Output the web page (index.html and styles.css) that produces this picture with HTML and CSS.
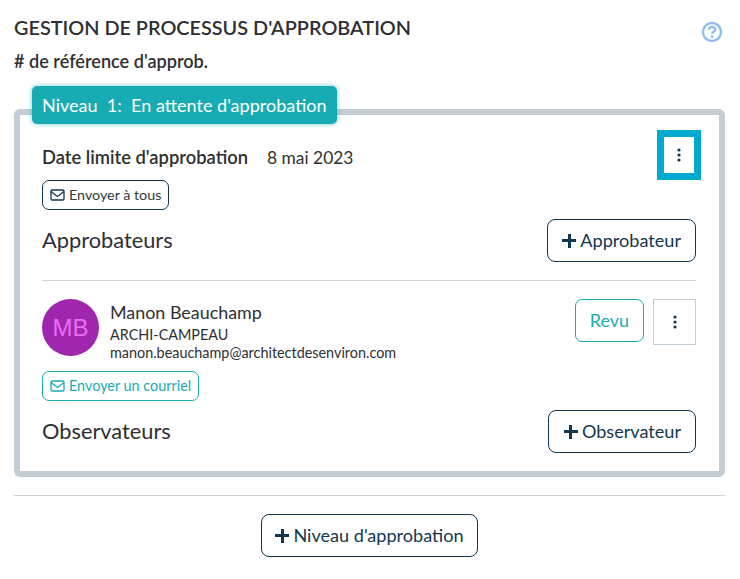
FILE: index.html
```html
<!DOCTYPE html>
<html lang="fr">
<head>
<meta charset="utf-8">
<title>Gestion de processus d'approbation</title>
<link rel="stylesheet" href="styles.css">
</head>
<body>
<main class="page">
  <header class="head">
    <div>
      <h1 class="title">GESTION DE PROCESSUS D'APPROBATION</h1>
      <p class="ref">
        # de référence d'approb.</p>
    </div>
    <svg class="help" width="22" height="22" viewBox="0 0 22 22" aria-hidden="true">
      <circle cx="11" cy="11" r="9" fill="none" stroke="#8fbdee" stroke-width="2.4"/>
      <path d="M7.9 8.6c.2-1.8 1.5-2.8 3.2-2.8 1.8 0 3.1 1.1 3.1 2.6 0 2.3-3 2.3-3 4.5" fill="none" stroke="#8fbdee" stroke-width="2.2"/>
      <circle cx="11.1" cy="15.6" r="1.4" fill="#8fbdee"/>
    </svg>
  </header>

  <section class="card">
    <div class="tag">Niveau&nbsp; 1:&nbsp; En attente d'approbation</div>

    <div class="date-row">
      <div class="date">
        <strong class="date-label">Date limite d'approbation</strong>
        <span class="date-value">8 mai 2023</span>
      </div>
      <button class="kebab kebab-focus" aria-label="Options">
        <svg width="4" height="14" viewBox="0 0 4 14"><circle cx="2" cy="2" r="1.6"/><circle cx="2" cy="7" r="1.6"/><circle cx="2" cy="12" r="1.6"/></svg>
      </button>
    </div>

    <button class="small-btn small-dark">
      <svg width="15" height="12" viewBox="0 0 15 12" fill="none" stroke="currentColor" stroke-width="1.3"><rect x="1" y="1" width="13" height="10" rx="1.2"/><path d="M1 2.5l6.5 5 6.5-5"/></svg>
      Envoyer à tous
    </button>

    <div class="section-row approvers">
      <h2 class="section-title">Approbateurs</h2>
      <button class="add-btn"><span class="plus"></span>Approbateur</button>
    </div>

    <hr class="inner-rule">

    <div class="person">
      <div class="avatar">MB</div>
      <div class="person-info">
        <div class="person-name">Manon Beauchamp</div>
        <div class="person-org">ARCHI-CAMPEAU</div>
        <div class="person-mail">manon.beauchamp@architectdesenviron.com</div>
      </div>
      <div class="person-actions">
        <button class="review-btn">Revu</button>
        <button class="kebab kebab-plain" aria-label="Options">
          <svg width="4" height="14" viewBox="0 0 4 14"><circle cx="2" cy="2" r="1.6"/><circle cx="2" cy="7" r="1.6"/><circle cx="2" cy="12" r="1.6"/></svg>
        </button>
      </div>
    </div>

    <button class="small-btn small-teal">
      <svg width="15" height="12" viewBox="0 0 15 12" fill="none" stroke="currentColor" stroke-width="1.3"><rect x="1" y="1" width="13" height="10" rx="1.2"/><path d="M1 2.5l6.5 5 6.5-5"/></svg>
      Envoyer un courriel
    </button>

    <div class="section-row observers">
      <h2 class="section-title">Observateurs</h2>
      <button class="add-btn"><span class="plus"></span>Observateur</button>
    </div>
  </section>

  <hr class="outer-rule">

  <div class="footer">
    <button class="add-btn"><span class="plus"></span>Niveau d'approbation</button>
  </div>
</main>
</body>
</html>
```
FILE: styles.css
```css
* { box-sizing: border-box; }
html, body { margin: 0; background: #fff; }
body { font-family: Lato, "Open Sans", sans-serif; color: #2f2f33; }
button { font-family: inherit; background: #fff; cursor: pointer; margin: 0; }

.page { width: 740px; height: 579px; padding: 15px 15px 0 14px; overflow: hidden; }

.head { display: flex; justify-content: space-between; align-items: flex-start; height: 71px; }
.title { margin: 0; font-size: 19.85px; line-height: 24px; font-weight: 600; color: #2f2f33; }
.ref { margin: 11px 0 0; font-size: 18.1px; line-height: 22px; font-weight: 600; color: #2f2f33; }
.help { margin: 6px 2px 0 0; }

.card {
  position: relative;
  margin-top: 23px;
  height: 368px;
  border: 6px solid #c1ced6;
  border-radius: 6px;
  padding: 22px 23px 0 22px;
}
.tag {
  position: absolute;
  top: -29px;
  left: 12px;
  height: 38px;
  padding: 0 10px;
  display: flex;
  align-items: center;
  background: #17acb3;
  color: #fff;
  font-size: 18.06px;
  border-radius: 5px;
  white-space: nowrap;
  box-shadow: 0 0 5px rgba(23, 172, 179, .6);
}

.date-row { display: flex; justify-content: space-between; align-items: center; height: 36px; }
.date { display: flex; align-items: baseline; gap: 19px; margin-top: 4px; }
.date-label { font-size: 18.35px; font-weight: 600; color: #2f2f33; }
.date-value { font-size: 17.4px; color: #2f2f33; }

.kebab { display: flex; align-items: center; justify-content: center; padding: 0; fill: #11374f; }
.kebab-focus { width: 30px; height: 36px; border: 0; outline: 7px solid #00aacf; margin-right: 2px; }
.kebab-plain { width: 43px; height: 46px; border: 1px solid #c1ced6; }

.small-btn {
  display: inline-flex; align-items: center; gap: 4px;
  height: 30px; padding: 0 7px 1px;
  font-size: 14.3px;
  border-radius: 7px; border: 1px solid;
}
.small-dark { margin-top: 7px; color: #33393d; border-color: #11374f; }
.small-dark svg { color: #11374f; }
.small-teal { margin-top: 9px; font-size: 14.4px; color: #17acb3; border-color: #17acb3; }

.section-row { display: flex; justify-content: space-between; align-items: center; }
.approvers { margin-top: 9px; }
.observers { margin-top: 9px; }
.section-title { margin: 0 0 2px; font-size: 21.8px; font-weight: 400; color: #2f2f33; }

.add-btn {
  display: inline-flex; align-items: center; gap: 4px;
  height: 43px; padding: 0 14px 2px;
  font-size: 18.1px; color: #11374f;
  border: 1px solid #11374f; border-radius: 8px;
}
.observers .add-btn { padding-left: 15px; }
.footer .add-btn { padding: 0 13px 2px; }
.plus { position: relative; width: 14px; height: 14px; margin-top: 2px; }
.plus::before, .plus::after { content: ""; position: absolute; background: #11374f; }
.plus::before { left: 0; right: 0; top: 5.5px; height: 3px; }
.plus::after { top: 0; bottom: 0; left: 5.5px; width: 3px; }

.inner-rule { margin: 18px 0 0; border: 0; border-top: 1px solid #d2d5d8; }

.person { display: flex; margin-top: 18px; }
.avatar {
  width: 57px; height: 57px; border-radius: 50%;
  background: #9f27ae; color: #ec6bf7;
  display: flex; align-items: center; justify-content: center;
  font-family: "Liberation Sans", sans-serif; font-size: 24px;
  flex: none;
}
.person-info { margin-left: 11px; flex: 1; }
.person-name { font-size: 17.9px; line-height: 28px; margin-top: -1px; color: #2f2f33; }
.person-org { font-size: 14.4px; line-height: 18px; color: #2f2f33; }
.person-mail { font-size: 14.4px; line-height: 18px; color: #2f2f33; }
.person-actions { display: flex; gap: 9px; align-items: flex-start; }
.review-btn {
  width: 69px; height: 43px; padding: 0 0 2px;
  font-size: 18px; color: #17acb3;
  border: 1px solid #17acb3; border-radius: 7px;
}

.outer-rule { margin: 18px 0 0; border: 0; border-top: 1px solid #d2d2d2; }
.footer { display: flex; justify-content: center; margin-top: 18px; }
```
